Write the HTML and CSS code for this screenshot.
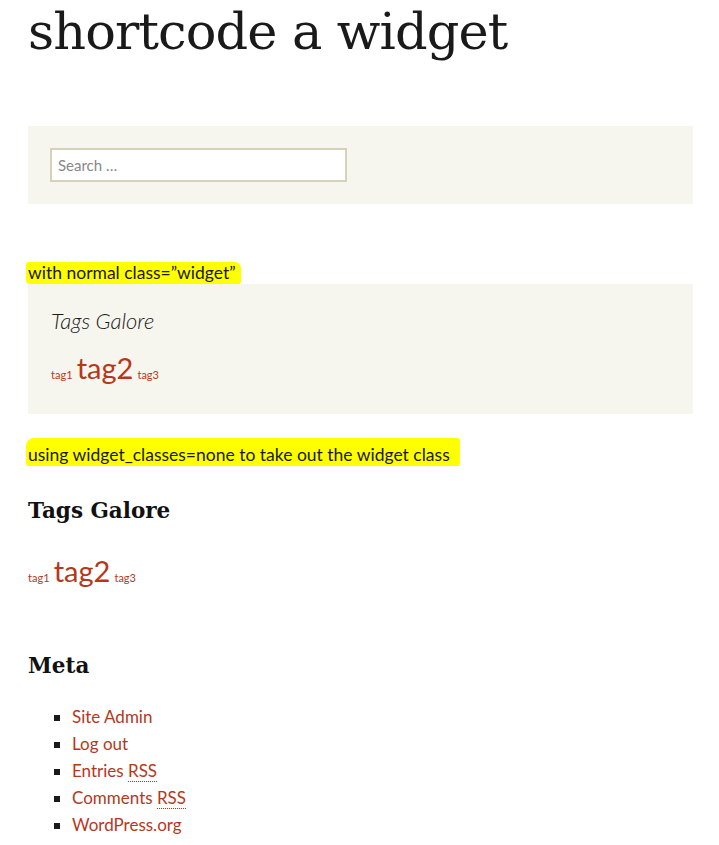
FILE: index.html
```html
<!DOCTYPE html>
<html>
<head>
<meta charset="utf-8">
<link rel="stylesheet" href="styles.css">
</head>
<body>
<main class="page">
  <h1 class="title">shortcode a widget</h1>

  <section class="widget search-widget">
    <div class="search-field">Search …</div>
  </section>

  <p class="note note-first"><span class="mark">with normal class=”widget”</span></p>

  <section class="widget tag-widget">
    <h2 class="widget-title-italic">Tags Galore</h2>
    <div class="tagcloud">
      <a class="tag small">tag1</a> <a class="tag large">tag2</a> <a class="tag small">tag3</a>
    </div>
  </section>

  <p class="note note-second"><span class="mark mark-wide">using widget_classes=none to take out the widget class</span></p>

  <section class="plain">
    <h2 class="slab-title">Tags Galore</h2>
    <div class="tagcloud">
      <a class="tag small">tag1</a> <a class="tag large">tag2</a> <a class="tag small">tag3</a>
    </div>
  </section>

  <section class="plain meta">
    <h2 class="slab-title">Meta</h2>
    <ul class="meta-list">
      <li><a>Site Admin</a></li>
      <li><a>Log out</a></li>
      <li><a>Entries <abbr>RSS</abbr></a></li>
      <li><a>Comments <abbr>RSS</abbr></a></li>
      <li><a>WordPress.org</a></li>
    </ul>
  </section>
</main>
</body>
</html>
```

FILE: styles.css
```css
html, body {
  margin: 0;
  padding: 0;
  background: #ffffff;
}

body {
  font-family: "Lato", "Liberation Sans", sans-serif;
  color: #1a1a1a;
  font-size: 16px;
}

.page {
  width: 665px;
  margin-left: 28px;
}

.title {
  font-family: "DejaVu Serif", serif;
  font-weight: normal;
  font-size: 51px;
  line-height: 64px;
  margin: 0;
  letter-spacing: -0.9px;
  color: #1a1a1a;
}

.widget {
  background: #f6f5ee;
  box-sizing: border-box;
}

.search-widget {
  margin-top: 62px;
  padding: 22px;
  height: 78px;
}

.search-field {
  width: 297px;
  height: 34px;
  box-sizing: border-box;
  border: 2px solid #d6d1bb;
  background: #fff;
  color: #888;
  font-size: 15px;
  padding: 0 6px;
  line-height: 30px;
}

.note {
  margin: 0;
  font-size: 17.5px;
  line-height: 22px;
}

.note-first {
  margin-top: 58px;
}

.mark {
  background: #ffff00;
  margin-left: -2px;
  padding: 0 5px 1px 2px;
  border-radius: 3px 6px 2px 4px;
}

.tag-widget {
  padding: 24px 23px 28px;
  height: 130px;
}

.widget-title-italic {
  font-family: "Lato", sans-serif;
  font-style: italic;
  font-weight: 300;
  font-size: 22px;
  line-height: 26px;
  margin: 0 0 16px;
  color: #1a1a1a;
}

.tagcloud {
  line-height: 36px;
}

.tag {
  color: #b5381b;
  text-decoration: none;
}

.tag.small {
  font-size: 11px;
}

.tag.large {
  font-size: 29px;
}

.note-second {
  margin-top: 30px;
}

.mark-wide {
  padding: 6px 10px 1px 2px;
  border-radius: 8px 3px 2px 2px;
}

.plain {
  margin-top: 30px;
}

.slab-title {
  font-family: "DejaVu Serif", serif;
  font-weight: bold;
  font-size: 21.5px;
  line-height: 30px;
  margin: 0 0 27px;
  color: #111;
}

.meta {
  margin-top: 55px;
}

.meta .slab-title {
  margin-bottom: 22px;
}

.meta-list {
  margin: 0;
  padding: 0 0 0 44px;
  list-style: square;
  font-size: 17px;
  line-height: 27px;
}

.meta-list a {
  color: #b5381b;
}

.meta-list abbr {
  text-decoration: none;
  border-bottom: 1px dotted #b5381b;
}
```
